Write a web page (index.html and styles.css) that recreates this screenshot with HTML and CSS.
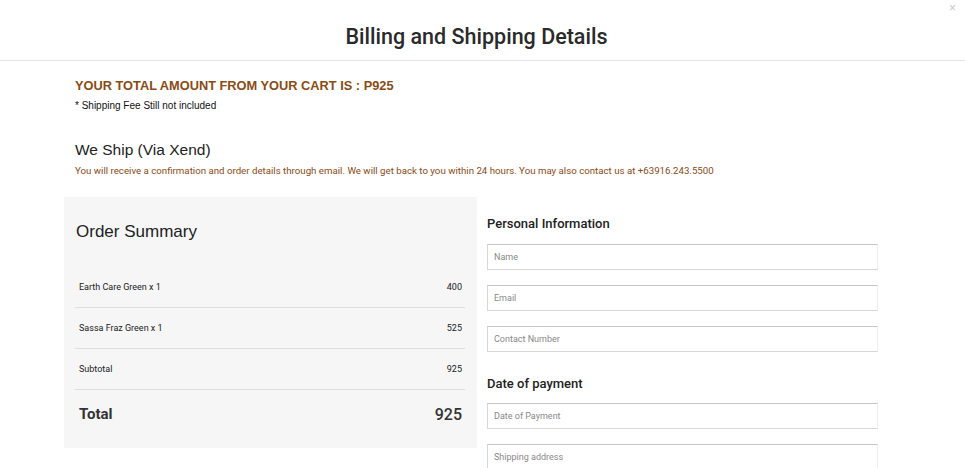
FILE: index.html
```html
<!DOCTYPE html>
<html>
<head>
<meta charset="utf-8">
<link rel="stylesheet" href="styles.css">
</head>
<body>
<div class="modal">
  <header class="modal-header">
    <h1 class="modal-title">Billing and Shipping Details</h1>
    <span class="close">×</span>
  </header>
  <div class="modal-body">
    <section class="intro">
      <h2 class="cart-total">YOUR TOTAL AMOUNT FROM YOUR CART IS : P925</h2>
      <p class="note">* Shipping Fee Still not included</p>
      <h3 class="ship-title">We Ship (Via Xend)</h3>
      <p class="ship-text">You will receive a confirmation and order details through email. We will get back to you within 24 hours. You may also contact us at +63916.243.5500</p>
    </section>
    <div class="columns">
      <div class="summary">
        <h3 class="summary-title">Order Summary</h3>
        <div class="row"><span>Earth Care Green x 1</span><span>400</span></div>
        <div class="row"><span>Sassa Fraz Green x 1</span><span>525</span></div>
        <div class="row"><span>Subtotal</span><span>925</span></div>
        <div class="row total"><span>Total</span><span>925</span></div>
      </div>
      <form class="form">
        <h4 class="form-title">Personal Information</h4>
        <input class="field" type="text" placeholder="Name">
        <input class="field" type="text" placeholder="Email">
        <input class="field" type="text" placeholder="Contact Number">
        <h4 class="form-title second">Date of payment</h4>
        <input class="field" type="text" placeholder="Date of Payment">
        <input class="field" type="text" placeholder="Shipping address">
      </form>
    </div>
  </div>
</div>
</body>
</html>
```

FILE: styles.css
```css
* { box-sizing: border-box; }
html, body { margin: 0; padding: 0; background: #fff; }
body { width: 965px; height: 468px; overflow: hidden; font-family: Roboto, "Liberation Sans", sans-serif; color: #222; }

.modal-header {
  position: relative;
  height: 61px;
  border-bottom: 1px solid #e6e6e6;
  display: flex;
  align-items: center;
  justify-content: center;
  padding-right: 12px;
}
.modal-title {
  margin: 12px 0 0 0;
  font-family: Roboto, sans-serif;
  font-weight: 500;
  font-size: 21.5px;
  color: #2a2a2a;
}
.close {
  position: absolute;
  top: 1px;
  right: 9px;
  font-size: 12px;
  line-height: 14px;
  color: #c8c8c8;
  font-family: "Liberation Sans", sans-serif;
}

.modal-body { padding-left: 64px; }
.intro { padding-left: 11px; padding-top: 17px; }
.cart-total {
  margin: 0;
  font-family: "Liberation Sans", Arial, sans-serif;
  font-weight: bold;
  font-size: 12.8px;
  line-height: 16px;
  color: #8a4b14;
}
.note {
  margin: 6px 0 0 0;
  font-family: "Liberation Sans", Arial, sans-serif;
  font-size: 10px;
  line-height: 12px;
  color: #111;
}
.ship-title {
  margin: 29px 0 0 0;
  font-family: "Liberation Sans", Arial, sans-serif;
  font-weight: normal;
  font-size: 15.5px;
  line-height: 18px;
  color: #222;
}
.ship-text {
  margin: 6px 0 0 0;
  font-size: 9.7px;
  line-height: 12px;
  color: #8a4b14;
}

.columns { display: flex; gap: 10px; margin-top: 20px; align-items: flex-start; }
.summary {
  width: 413px;
  height: 251px;
  background: #f6f6f6;
  padding: 0 12px 0 11px;
}
.summary-title {
  margin: 0 0 0 1px;
  padding-top: 24px;
  font-family: "Liberation Sans", Arial, sans-serif;
  font-weight: normal;
  font-size: 17px;
  line-height: 22px;
  color: #222;
  height: 70px;
}
.row {
  height: 41px;
  display: flex;
  justify-content: space-between;
  align-items: center;
  padding: 0 3px 0 4px;
  border-bottom: 1px solid #dedede;
  font-size: 9px;
  color: #222;
}
.row.total {
  border-bottom: none;
  height: 50px;
  align-items: center;
  padding-bottom: 2px;
}
.row.total span:first-child { font-size: 15px; font-weight: 700; color: #333; }
.row.total span:last-child { font-size: 16px; font-weight: 500; color: #333; }

.form { width: 391px; display: flex; flex-direction: column; }
.form-title {
  margin: 19px 0 12px 0;
  font-size: 13px;
  font-weight: 500;
  line-height: 16px;
  color: #222;
}
.form-title.second { margin-top: 9px; margin-bottom: 11px; }
.field {
  width: 391px;
  height: 26px;
  margin: 0 0 15px 0;
  padding: 0 6px;
  border: 1px solid;
  border-color: #c6c6c6 #eeeeee #d8d8d8 #d8d8d8;
  background: #fff;
  font-family: Roboto, sans-serif;
  font-size: 9px;
  color: #222;
  outline: none;
}
.field::placeholder { color: #888; }
```
